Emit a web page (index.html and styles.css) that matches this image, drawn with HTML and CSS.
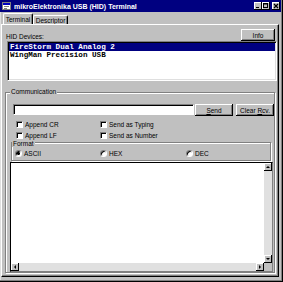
FILE: index.html
```html
<!DOCTYPE html>
<html lang="en">

<head>
    <meta charset="UTF-8">
    <meta name="viewport" content="width=device-width, initial-scale=1.0">
    <title>mikroElektronika USB (HID) Terminal</title>
    <link rel="stylesheet" href="styles.css">
</head>

<body>
    <div class="window">
        <div class="title-bar">
            <svg class="app-icon" width="9" height="8" viewBox="0 0 9 8">
                <rect x="0" y="0" width="9" height="8" fill="#808080"/>
                <rect x="1" y="1" width="7" height="6" fill="#fff"/>
                <rect x="1" y="1" width="7" height="2" fill="#0000c0"/>
                <rect x="2" y="4" width="5" height="1" fill="#808080"/>
                <rect x="2" y="6" width="3" height="1" fill="#808080"/>
            </svg>
            <span class="title-text">mikroElektronika USB (HID) Terminal</span>
            <div class="title-buttons">
                <span class="title-btn">
                    <svg width="8" height="8" viewBox="0 0 8 8"><rect x="2" y="5" width="3" height="1" fill="#000"/></svg>
                </span>
                <span class="title-btn">
                    <svg width="8" height="8" viewBox="0 0 8 8"><rect x="1.5" y="1.5" width="4" height="4" fill="none" stroke="#000"/><rect x="1" y="1" width="5" height="1.5" fill="#000"/></svg>
                </span>
                <span class="title-btn close">
                    <svg width="8" height="8" viewBox="0 0 8 8"><path d="M2 2 L6 6 M6 2 L2 6" stroke="#000" stroke-width="1.2"/></svg>
                </span>
            </div>
        </div>

        <div class="tabs">
            <span class="tab active">Terminal</span>
            <span class="tab descriptor">Descriptor</span>
        </div>

        <div class="panel">
            <div class="hid-row">
                <span class="hid-label">HID Devices:</span>
                <button class="btn info">Info</button>
            </div>
            <div class="listbox">
                <div class="list-item selected">FireStorm Dual Analog 2</div>
                <div class="list-item">WingMan Precision USB</div>
            </div>

            <div class="group comm">
                <span class="group-label">Communication</span>
                <div class="send-row">
                    <div class="text-input"></div>
                    <button class="btn send"><u>S</u>end</button>
                    <button class="btn clear">Clear <u>R</u>cv.</button>
                </div>
                <div class="checks">
                    <label class="check"><span class="check-box"></span>Append CR</label>
                    <label class="check"><span class="check-box"></span>Send as Typing</label>
                    <label class="check"><span class="check-box"></span>Append LF</label>
                    <label class="check"><span class="check-box"></span>Send as Number</label>
                </div>

                <div class="group format">
                    <span class="group-label format-label">Format</span>
                    <div class="radios">
                        <label class="radio"><span class="radio-dot checked"></span>ASCII</label>
                        <label class="radio"><span class="radio-dot"></span>HEX</label>
                        <label class="radio"><span class="radio-dot"></span>DEC</label>
                    </div>
                </div>

                <div class="output">
                    <div class="output-text"></div>
                    <div class="vscroll">
                        <span class="arrow up"></span>
                        <span class="track"></span>
                        <span class="arrow down"></span>
                    </div>
                    <div class="hscroll">
                        <span class="arrow left"></span>
                        <span class="track"></span>
                        <span class="arrow right"></span>
                    </div>
                    <div class="corner"></div>
                </div>
            </div>
        </div>
    </div>
</body>

</html>
```

FILE: styles.css
```css
body {
    margin: 0;
    background-color: #c0c0c0;
    font-family: 'Liberation Sans', Arial, sans-serif;
    font-size: 6.5px;
    line-height: 7px;
    color: #000;
}

.window {
    width: 283px;
    height: 282px;
    box-sizing: border-box;
    padding: 0 2px 2px 0;
    display: flex;
    flex-direction: column;
    background-color: #c0c0c0;
    box-shadow: inset -1px -1px #000, inset -2px -2px #808080, inset 1px 0 #dfdfdf;
}

/* title bar */
.title-bar {
    height: 12px;
    flex: none;
    display: flex;
    align-items: center;
    background-color: #000080;
    color: #fff;
}

.app-icon {
    margin-left: 2px;
    flex: none;
}

.title-text {
    margin-left: 3px;
    font-weight: bold;
    font-size: 7px;
    white-space: nowrap;
}

.title-buttons {
    margin-left: auto;
    margin-right: 1px;
    display: flex;
}

.title-btn {
    width: 8px;
    height: 8px;
    background-color: #c0c0c0;
    box-shadow: inset -1px -1px #000, inset 1px 1px #fff;
    display: flex;
}

.title-btn.close {
    margin-left: 2px;
}

/* tabs */
.tabs {
    height: 11px;
    flex: none;
    margin-top: 1px;
    padding-left: 3px;
    display: flex;
    align-items: flex-end;
}

.tab {
    height: 9px;
    box-sizing: border-box;
    padding-top: 1px;
    text-align: center;
    border-top: 1px solid #fff;
    border-left: 1px solid #fff;
    border-right: 1px solid #000;
    border-radius: 2px 2px 0 0;
    box-shadow: inset -1px 0 #808080;
}

.tab.active {
    width: 30px;
    height: 11px;
    padding-top: 2px;
}

.tab.descriptor {
    width: 35px;
}

.panel {
    flex: 1;
    min-height: 0;
    margin: 0 2px 3px 1px;
    display: flex;
    flex-direction: column;
    border: 1px solid;
    border-color: #fff #000 #000 #fff;
    box-shadow: inset -1px -1px #808080;
}

/* buttons */
.btn {
    padding: 0;
    border: none;
    background-color: #c0c0c0;
    font-family: inherit;
    font-size: 6.5px;
    line-height: 7px;
    color: #000;
    box-shadow: inset -1px -1px #000, inset 1px 1px #fff, inset -2px -2px #808080;
}

.hid-row {
    height: 12px;
    flex: none;
    margin-top: 4px;
    padding-left: 4px;
    display: flex;
    align-items: flex-end;
}

.hid-label {
    margin-bottom: 1px;
}

.btn.info {
    margin-left: auto;
    margin-right: 3px;
    width: 34px;
    height: 12px;
}

.listbox {
    width: 270px;
    height: 40px;
    flex: none;
    box-sizing: border-box;
    margin-left: 5px;
    padding: 1px;
    background-color: #fff;
    border: 1px solid;
    border-color: #808080 #fff #fff #808080;
    box-shadow: inset 1px 1px #000, inset -1px -1px #dfdfdf;
}

.list-item {
    height: 8px;
    padding-left: 1px;
    font-family: 'Liberation Mono', 'Courier New', monospace;
    font-weight: bold;
    font-size: 7.6px;
    line-height: 8px;
    white-space: nowrap;
}

.list-item.selected {
    background-color: #000080;
    color: #fff;
}

/* group boxes */
.group {
    display: flex;
    flex-direction: column;
    border: 1px solid #808080;
    box-shadow: inset 1px 1px #fff, 1px 1px #fff;
}

.group.comm {
    flex: 1;
    min-height: 0;
    width: 270px;
    box-sizing: border-box;
    margin: 11px 0 3px 3px;
}

.group-label {
    align-self: flex-start;
    margin: -5px 0 0 4px;
    padding: 0 1px;
    background-color: #c0c0c0;
}

.send-row {
    margin: 9px 0 0 7px;
    display: flex;
    align-items: flex-start;
}

.text-input {
    width: 181px;
    height: 11px;
    box-sizing: border-box;
    background-color: #fff;
    border: 1px solid;
    border-color: #808080 #fff #fff #808080;
    box-shadow: inset 1px 1px #000;
}

.btn.send,
.btn.clear {
    width: 38px;
    height: 12px;
}

.btn.send {
    margin-left: 1px;
}

.btn.clear {
    margin-left: 3px;
}

.checks {
    margin: 5px 0 0 10px;
    display: grid;
    grid-template-columns: 84px auto;
    grid-auto-rows: 11px;
}

.check {
    display: flex;
    align-items: flex-start;
    gap: 2px;
}

.check-box {
    width: 7px;
    height: 7px;
    box-sizing: border-box;
    background-color: #fff;
    border: 1px solid;
    border-color: #808080 #fff #fff #808080;
    box-shadow: inset 1px 1px #000;
}

.group.format {
    width: 260px;
    height: 19px;
    flex: none;
    box-sizing: border-box;
    margin: -1px 0 0 5px;
}

.format-label {
    margin: -3px 0 0 0;
}

.radios {
    margin: 3px 0 0 3px;
    display: grid;
    grid-template-columns: 85px 86px auto;
}

.radio {
    display: flex;
    align-items: center;
    gap: 2px;
}

.radio-dot {
    width: 7px;
    height: 7px;
    box-sizing: border-box;
    border-radius: 50%;
    background-color: #fff;
    border: 1px solid;
    border-color: #808080 #fff #fff #808080;
    box-shadow: inset 1px 1px #000;
}

.radio-dot.checked {
    background: radial-gradient(circle, #000 0 1.3px, #fff 1.6px);
}

/* output area */
.output {
    flex: 1;
    min-height: 0;
    width: 263px;
    box-sizing: border-box;
    margin: 1px 0 0 4px;
    display: grid;
    grid-template-columns: 1fr 8px;
    grid-template-rows: 1fr 8px;
    background-color: #fff;
    border: 1px solid;
    border-color: #000 #808080 #808080 #000;
}

.vscroll {
    display: flex;
    flex-direction: column;
}

.hscroll {
    display: flex;
}

.track {
    flex: 1;
    background-color: #e0e0e0;
}

.corner {
    background-color: #c0c0c0;
}

.arrow {
    width: 8px;
    height: 8px;
    flex: none;
    box-sizing: border-box;
    background-color: #c0c0c0;
    box-shadow: inset -1px -1px #000, inset 1px 1px #fff;
    display: flex;
    align-items: center;
    justify-content: center;
}

.arrow::after {
    content: "";
    width: 0;
    height: 0;
    border: 2px solid transparent;
}

.arrow.up::after {
    border-bottom-color: #000;
    border-top-width: 0;
}

.arrow.down::after {
    border-top-color: #000;
    border-bottom-width: 0;
}

.arrow.left::after {
    border-right-color: #000;
    border-left-width: 0;
}

.arrow.right::after {
    border-left-color: #000;
    border-right-width: 0;
}
```
